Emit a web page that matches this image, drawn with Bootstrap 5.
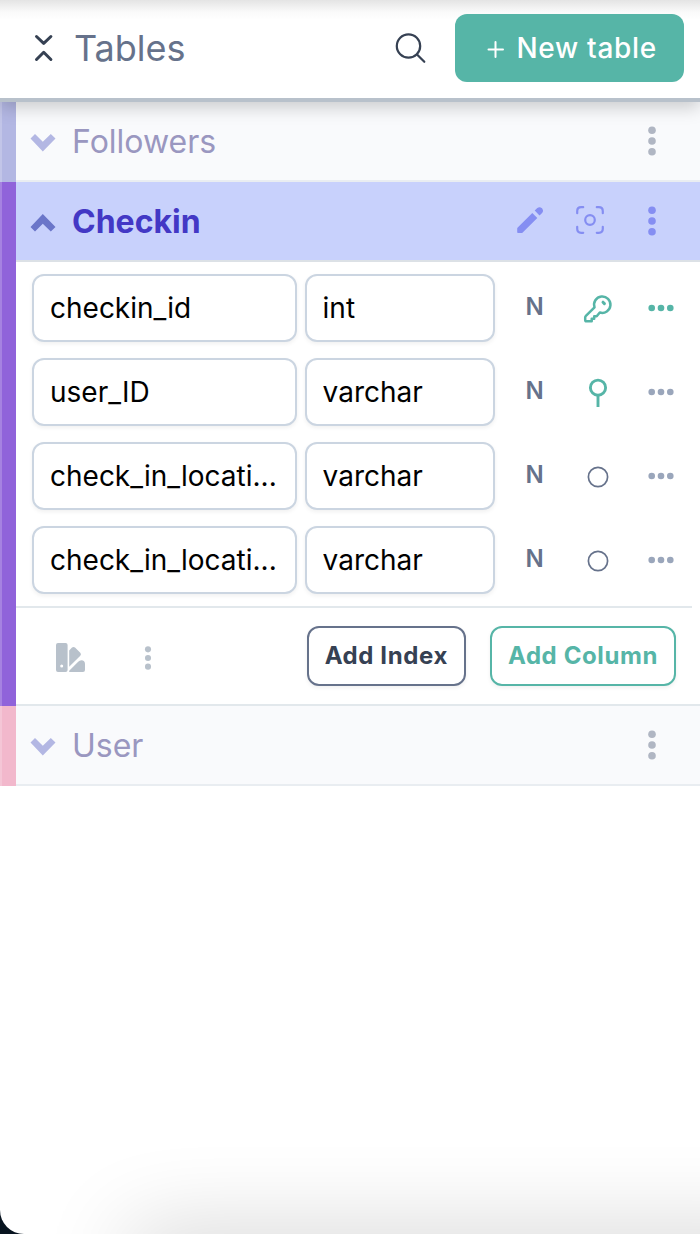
<!DOCTYPE html>
<html lang="en">
<head>
<meta charset="utf-8">
<meta name="viewport" content="width=device-width, initial-scale=1">
<title>Tables</title>
<link href="https://cdn.jsdelivr.net/npm/bootstrap@5.3.0/dist/css/bootstrap.min.css" rel="stylesheet">
<style>
  :root { --teal: #56b5a7; --slate: #66728b; --ink: #364153; --line: #e2e8ec; }
  body { font-family: Inter, "Liberation Sans", sans-serif; background: #081420; }
  button { font-family: inherit; }
  svg { display: block; flex: none; }
  .panel { background: #fff; border-bottom-left-radius: 24px; }
  /* soft shadow cast on the panel from below */
  .panel::after { content: ""; position: absolute; top: 100%; left: 130px; right: -100px; height: 60px; box-shadow: 0 0 90px rgba(0,0,0,.2); }
  .topbar { height: 102px; padding: 0 16px 2px 30px; border-bottom: 4px solid #b8c1cb;
    background: linear-gradient(#e4e4e4, #fafafa 12px, #fff 20px); box-shadow: 0 6px 16px rgba(0,0,0,.18); z-index: 2; }
  .title { font-size: 36px; line-height: 44px; color: var(--slate); font-weight: 400; }
  .ghost { border: 0; background: none; padding: 0; display: flex; align-items: center; justify-content: center; color: inherit; }
  .btn-new { height: 68px; padding: 0 26px; border-radius: 12px; background: var(--teal); color: #fff; font-size: 28px; font-weight: 500; letter-spacing: .025em; }
  .btn-new:hover { background: #48a496; color: #fff; }
  .entry { border-left: 16px solid var(--bar); position: relative; }
  .entry::before { content: ""; position: absolute; left: -16px; top: 0; bottom: 0; width: 2px; background: rgba(255,255,255,.2); }
  .entry-head { height: 80px; padding: 0 16px 0 14px; border-bottom: 2px solid #e9edf1; background: #f9fafc; color: #b0b6c3; }
  .entry-name { padding-top: 2px; font-size: 32px; line-height: 40px; font-weight: 400; color: #9a97c0; }
  .chev { width: 26px; padding-top: 4px; margin-right: 16px; color: #b3b7e3; }
  .is-open .entry-head { background: #c8d1fc; border-color: #dce1e6; color: #858ef2; }
  .is-open .entry-name { color: #4338c5; font-weight: 700; }
  .is-open .chev { color: #6b76c9; }
  .act { width: 60px; height: 60px; }
  .act-menu { width: 64px; }
  .fields { padding: 12px 0 12px 16px; margin-right: 8px; border-bottom: 2px solid var(--line); }
  .field { height: 68px; min-width: 0; padding: 0 16px; border: 2px solid #cbd5e1; border-radius: 12px; font-size: 28px; color: #000; background: #fff; box-shadow: 0 2px 4px rgba(0,0,0,.06); text-overflow: ellipsis; }
  .field-name { flex: 37 1 0; }
  .field-type { flex: 25 1 0; }
  .cell { width: 63px; height: 60px; color: var(--slate); }
  .nullable { font-size: 24px; line-height: 28px; font-weight: 600; padding-bottom: 2px; }
  .on { color: var(--teal); }
  .more { color: #9aa6bb; }
  .more.on { color: var(--teal); }
  .entry-foot { padding: 18px 24px 18px 16px; border-bottom: 2px solid var(--line); color: #b8c1cb; }
  .tool { width: 77px; height: 60px; padding-top: 3px; }
  .btn-add { height: 60px; padding: 0 16px; border: 2px solid var(--slate); border-radius: 12px; font-size: 24px; line-height: 28px; font-weight: 700; letter-spacing: .025em; color: var(--ink); background: #fff; box-shadow: 0 2px 4px rgba(0,0,0,.06); }
  .btn-add.on { border-color: var(--teal); color: var(--teal); }
</style>
</head>
<body>
<svg width="0" height="0" class="position-absolute" aria-hidden="true">
  <symbol id="chev" viewBox="0 0 26 18"><path d="M.5 4.500 5 0l7.800 7.800L20.800 0l4.700 4.500L12.800 17.500z" fill="currentColor"/></symbol>
  <symbol id="dots-v" viewBox="0 0 10 30"><g fill="currentColor"><circle cx="5" cy="4.200" r="3.800"/><circle cx="5" cy="15" r="3.800"/><circle cx="5" cy="25.800" r="3.800"/></g></symbol>
  <symbol id="dots-h" viewBox="0 0 26 8"><g fill="currentColor"><circle cx="3.700" cy="4" r="3.300"/><circle cx="13" cy="4" r="3.300"/><circle cx="22.300" cy="4" r="3.300"/></g></symbol>
  <symbol id="ring" viewBox="0 0 28 28"><circle cx="14" cy="15" r="9.600" fill="none" stroke="currentColor" stroke-width="1.700"/></symbol>
</svg>
<div class="panel position-relative overflow-hidden min-vh-100">
  <header class="topbar d-flex align-items-center position-relative">
    <button class="ghost" type="button" aria-label="Collapse all">
      <svg width="28" height="28" viewBox="0 0 28 28" fill="none" stroke="#364153" stroke-width="3" stroke-linecap="round" stroke-linejoin="round"><path d="M6.500 2.500 13.700 9.300l7.200-6.800M6.500 25.500l7.200-7.200 7.200 7.200"/></svg>
    </button>
    <h1 class="title mb-0 ms-3 me-auto">Tables</h1>
    <button class="ghost me-4" type="button" aria-label="Search">
      <svg width="40" height="40" viewBox="0 0 40 40" fill="none" stroke="#364153" stroke-width="2.200" stroke-linecap="round"><circle cx="17.500" cy="18" r="11.700"/><path d="m26 26.500 7.300 7.300"/></svg>
    </button>
    <button class="btn btn-new d-flex align-items-center gap-2" type="button"><svg width="26" height="28" viewBox="0 0 26 28" stroke="#fff" stroke-width="2" stroke-linecap="round"><path d="M13.500 8v15M6.500 15.500h14.500"/></svg>New table</button>
  </header>

  <main>
    <section class="entry" style="--bar:#b3b7e3">
      <div class="entry-head d-flex align-items-center">
        <button class="ghost chev" type="button" aria-label="Expand Followers"><svg width="26" height="18"><use href="#chev"/></svg></button>
        <h2 class="entry-name mb-0 me-auto">Followers</h2>
        <button class="ghost act act-menu" type="button" aria-label="Menu"><svg width="10" height="30"><use href="#dots-v"/></svg></button>
      </div>
    </section>

    <section class="entry is-open" style="--bar:#9063da">
      <div class="entry-head d-flex align-items-center">
        <button class="ghost chev" type="button" aria-label="Collapse Checkin"><svg width="26" height="18" viewBox="0 0 26 18"><path d="M.5 13 5 17.500l7.800-7.800 8 7.800 4.700-4.500L12.800 0z" fill="currentColor"/></svg></button>
        <h2 class="entry-name mb-0 me-auto">Checkin</h2>
        <button class="ghost act" type="button" aria-label="Edit"><svg width="28" height="28" viewBox="0 1 28 28" fill="currentColor"><path d="M1.200 22.500q0-.6.5-1.100L16.300 7l5 5L6.700 26.500q-.5.5-1.200.5H2q-.8 0-.8-.8zM18.700 4.600l2.600-2.600q1.200-1 2.800-.8 2.500.5 2.900 3 .2 1.500-.9 2.800l-2.600 2.600z"/></svg></button>
        <button class="ghost act" type="button" aria-label="Focus"><svg width="28" height="28" viewBox="0 0 28 28" overflow="visible" fill="none" stroke="currentColor" stroke-width="2.200" stroke-linecap="round"><path d="M1.200 6.200v-2q0-4 4-4h2M20.800.2h2q4 0 4 4v2M26.800 19.800v2q0 4-4 4h-2M7.200 25.800h-2q-4 0-4-4v-2"/><circle cx="14" cy="13" r="4.800"/></svg></button>
        <button class="ghost act act-menu" type="button" aria-label="Menu"><svg width="10" height="30"><use href="#dots-v"/></svg></button>
      </div>

      <div class="fields d-flex flex-column gap-3">
        <div class="d-flex align-items-center">
          <input class="field field-name me-2" type="text" value="checkin_id" aria-label="Column name">
          <input class="field field-type me-2" type="text" value="int" aria-label="Column type">
          <button class="ghost cell nullable" type="button">N</button>
          <button class="ghost cell on" type="button" aria-label="Primary key"><svg width="28" height="28" viewBox="0 -1 28 28" overflow="visible" fill="none" stroke="currentColor" stroke-width="2.500" stroke-linejoin="round" stroke-linecap="round"><path d="M10.500 12.300 1.900 20.900q-.7.7-.7 1.600V25q0 1.300 1.300 1.300h5.200v-2.600h2.500v-2.500h2.500l3.100-3.700a8.200 8.200 0 1 0-5.300-5.200z"/><path d="m19 7.200 1.400 1.400" stroke-width="3"/></svg></button>
          <button class="ghost cell more on" type="button" aria-label="Column options"><svg width="26" height="8"><use href="#dots-h"/></svg></button>
        </div>
        <div class="d-flex align-items-center">
          <input class="field field-name me-2" type="text" value="user_ID" aria-label="Column name">
          <input class="field field-type me-2" type="text" value="varchar" aria-label="Column type">
          <button class="ghost cell nullable" type="button">N</button>
          <button class="ghost cell on" type="button" aria-label="Index"><svg width="28" height="28" viewBox="0 0 28 28" overflow="visible" fill="none" stroke="currentColor" stroke-width="2.900"><circle cx="14" cy="9.700" r="7.600"/><path d="M14 17.300V29"/></svg></button>
          <button class="ghost cell more" type="button" aria-label="Column options"><svg width="26" height="8"><use href="#dots-h"/></svg></button>
        </div>
        <div class="d-flex align-items-center">
          <input class="field field-name me-2" type="text" value="check_in_locati..." aria-label="Column name">
          <input class="field field-type me-2" type="text" value="varchar" aria-label="Column type">
          <button class="ghost cell nullable" type="button">N</button>
          <button class="ghost cell" type="button" aria-label="No index"><svg width="28" height="28"><use href="#ring"/></svg></button>
          <button class="ghost cell more" type="button" aria-label="Column options"><svg width="26" height="8"><use href="#dots-h"/></svg></button>
        </div>
        <div class="d-flex align-items-center">
          <input class="field field-name me-2" type="text" value="check_in_locati..." aria-label="Column name">
          <input class="field field-type me-2" type="text" value="varchar" aria-label="Column type">
          <button class="ghost cell nullable" type="button">N</button>
          <button class="ghost cell" type="button" aria-label="No index"><svg width="28" height="28"><use href="#ring"/></svg></button>
          <button class="ghost cell more" type="button" aria-label="Column options"><svg width="26" height="8"><use href="#dots-h"/></svg></button>
        </div>
      </div>

      <div class="entry-foot d-flex align-items-center">
        <button class="ghost tool" type="button" aria-label="Colour"><svg width="32" height="32" viewBox="0 0 32 32" fill="currentColor"><path fill-rule="evenodd" d="M3 1h7.600q2 0 2 2v25q0 2-2 2H3q-2 0-2-2V3q0-2 2-2zm3.700 21.500a1.500 1.500 0 1 0 0 3 1.500 1.500 0 0 0 0-3z"/><path d="M14.200 8.500 17 5.600q1.500-1.400 3 0l5.300 5.200q1.400 1.500 0 3L14.200 24.800zM14.200 30v-1.200l9-9q1.300-1.500 3.200-1.500 3.600.2 3.600 3.700v6q0 2-2 2z"/></svg></button>
        <button class="ghost tool me-auto" type="button" aria-label="More"><svg width="8" height="24"><use href="#dots-v"/></svg></button>
        <button class="btn-add me-4" type="button">Add Index</button>
        <button class="btn-add on" type="button">Add Column</button>
      </div>
    </section>

    <section class="entry" style="--bar:#f2b8cc">
      <div class="entry-head d-flex align-items-center">
        <button class="ghost chev" type="button" aria-label="Expand User"><svg width="26" height="18"><use href="#chev"/></svg></button>
        <h2 class="entry-name mb-0 me-auto">User</h2>
        <button class="ghost act act-menu" type="button" aria-label="Menu"><svg width="10" height="30"><use href="#dots-v"/></svg></button>
      </div>
    </section>
  </main>
</div>
<script src="https://cdn.jsdelivr.net/npm/bootstrap@5.3.0/dist/js/bootstrap.bundle.min.js"></script>
</body>
</html>
